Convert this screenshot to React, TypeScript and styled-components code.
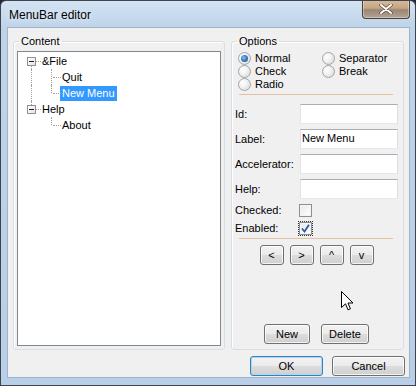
import React from "react";
import styled, { createGlobalStyle } from "styled-components";

const Global = createGlobalStyle`
  html, body { margin: 0; padding: 0; background: #2b2433; }
  body { font-family: "Liberation Sans", Arial, sans-serif; font-size: 11px; color: #000; }
  * { box-sizing: border-box; }
`;

const Window = styled.div`
  position: relative;
  width: 416px;
  height: 386px;
  display: flex;
  flex-direction: column;
  padding: 0 5px 7px 6px;
  border: 1px solid #3d4450;
  border-radius: 6px 6px 0 0;
  background: linear-gradient(180deg, #d3e3f3 0px, #bfd4ea 26px, #b9cfe7 100%);
  overflow: hidden;
`;

const TitleBar = styled.div`
  height: 26px;
  flex: none;
  display: flex;
  align-items: flex-start;
`;

const Title = styled.span`
  font-size: 12px;
  line-height: 15px;
  padding: 7px 0 0 2px;
  color: #000;
  text-shadow: 0 0 6px rgba(255, 255, 255, 0.9);
`;

const CloseButton = styled.div`
  margin-left: auto;
  width: 48px;
  height: 19px;
  margin-top: -1px;
  display: flex;
  align-items: center;
  justify-content: center;
  border: 1px solid #4d4036;
  border-top: none;
  border-radius: 0 0 4px 4px;
  background: linear-gradient(180deg, #d6bb9c 0%, #c6a582 45%, #988676 55%, #b4a493 100%);
  box-shadow: inset 0 0 0 1px rgba(255, 255, 255, 0.35);
`;

const Client = styled.div`
  flex: 1;
  display: flex;
  flex-direction: column;
  background: #f0f0f0;
  border: 1px solid #9fb4cb;
  padding: 7px 4px 1px 5px;
`;

const Groups = styled.div`
  flex: 1;
  display: flex;
  gap: 6px;
`;

const Group = styled.fieldset<{ $w: number }>`
  width: ${(p) => p.$w}px;
  flex: none;
  margin: 0;
  min-width: 0;
  display: flex;
  flex-direction: column;
  border: 1px solid #d5dfe5;
  border-radius: 3px;
  box-shadow: inset 1px 1px 0 #fff;
  padding: 3px 3px 3px 3px;
`;

const OptionsGroup = styled(Group)`
  padding: 4px 5px 5px 3px;
`;

const Legend = styled.legend`
  margin-left: 2px;
  padding: 0 2px;
  font-size: 11px;
  line-height: 13px;
`;

const TreeBox = styled.div`
  flex: 1;
  background: #fff;
  border: 1px solid #828790;
  padding: 1px 0 0 3px;
`;

const Row = styled.div`
  display: flex;
  height: 16px;
  align-items: center;
`;

const Guide = styled.span<{ $up?: boolean; $down?: boolean; $right?: boolean }>`
  position: relative;
  width: 20px;
  height: 16px;
  flex: none;
  &::before {
    content: "";
    position: absolute;
    left: 10px;
    top: ${(p) => (p.$up ? 0 : 8)}px;
    bottom: ${(p) => (p.$down ? 0 : 8)}px;
    border-left: 1px dotted #a0a0a0;
    display: ${(p) => (p.$up || p.$down ? "block" : "none")};
  }
  &::after {
    content: "";
    position: absolute;
    left: 12px;
    right: 0;
    top: 8px;
    border-top: 1px dotted #a0a0a0;
    display: ${(p) => (p.$right ? "block" : "none")};
  }
`;

const Expander = styled.span`
  position: absolute;
  left: 6px;
  top: 4px;
  width: 9px;
  height: 9px;
  z-index: 1;
  border: 1px solid #919191;
  background: linear-gradient(135deg, #ffffff 0%, #e4e4e4 100%);
  &::after {
    content: "";
    position: absolute;
    left: 1px;
    top: 3px;
    width: 5px;
    height: 1px;
    background: #1e1e1e;
  }
`;

const NodeLabel = styled.span<{ $selected?: boolean }>`
  margin-left: -1px;
  padding: 0 2px;
  line-height: 15px;
  height: 15px;
  font-size: 11px;
  background: ${(p) => (p.$selected ? "#3399ff" : "transparent")};
  color: ${(p) => (p.$selected ? "#fff" : "#000")};
  margin-top: ${(p) => (p.$selected ? 1 : 0)}px;
`;

const RadioGrid = styled.div`
  display: grid;
  grid-template-columns: 84px auto;
  grid-auto-rows: 13px;
  margin-left: 3px;
`;

const RadioItem = styled.label`
  display: flex;
  align-items: center;
  gap: 4px;
  font-size: 11px;
  line-height: 13px;
`;

const RadioCircle = styled.span<{ $on?: boolean }>`
  position: relative;
  width: 13px;
  height: 13px;
  flex: none;
  border-radius: 50%;
  border: 1px solid #a2a5a9;
  background: radial-gradient(circle at 35% 35%, #ffffff 0%, #f2f2f2 40%, #d4d4d4 100%);
  &::after {
    content: "";
    position: absolute;
    left: 2px;
    top: 2px;
    width: 7px;
    height: 7px;
    border-radius: 50%;
    display: ${(p) => (p.$on ? "block" : "none")};
    background: radial-gradient(circle at 40% 40%, #8ec3f2 0%, #3f7fc4 45%, #1b4a8a 100%);
  }
`;

const Rule = styled.div<{ $top: number }>`
  height: 1px;
  margin: ${(p) => p.$top}px 5px 0 4px;
  background: #dfc3a2;
  flex: none;
`;

const Form = styled.div`
  display: grid;
  grid-template-columns: 65px 98px;
  grid-template-rows: 20px 20px 20px 20px 13px 13px;
  row-gap: 5px;
  margin-top: 9px;
  align-items: center;
`;

const FieldLabel = styled.span`
  font-size: 11px;
  line-height: 13px;
  white-space: nowrap;
`;

const TextBox = styled.div`
  height: 20px;
  background: #fff;
  border: 1px solid;
  border-color: #abadb3 #dbdfe6 #e3e9ef #e2e3ea;
  padding: 0 1px;
  font-size: 11px;
  line-height: 16px;
  white-space: nowrap;
  overflow: hidden;
`;

const CheckBox = styled.span<{ $focus?: boolean }>`
  width: 13px;
  height: 13px;
  margin-left: -1px;
  display: flex;
  align-items: center;
  justify-content: center;
  border: 1px solid #8e8f8f;
  background: linear-gradient(135deg, #e9e9e9 0%, #ffffff 100%);
  box-shadow: inset 0 0 0 1px #f4f4f4;
  outline: ${(p) => (p.$focus ? "1px dotted #333" : "none")};
  outline-offset: 0px;
`;

const ButtonRow = styled.div<{ $gap: number; $top?: number }>`
  display: flex;
  justify-content: center;
  gap: ${(p) => p.$gap}px;
  margin-top: ${(p) => p.$top ?? 0}px;
  flex: none;
`;

const Spacer = styled.div`
  flex: 1;
`;

const Button = styled.div<{ $w: number; $default?: boolean }>`
  width: ${(p) => p.$w}px;
  height: 20px;
  display: flex;
  align-items: center;
  justify-content: center;
  font-size: 11px;
  border: 1px solid ${(p) => (p.$default ? "#3c7fb1" : "#707070")};
  border-radius: 3px;
  background: linear-gradient(180deg, #f2f2f2 0%, #ebebeb 50%, #dddddd 50%, #cfcfcf 100%);
  box-shadow: inset 0 0 0 1px ${(p) => (p.$default ? "#a9d6f5" : "rgba(255,255,255,0.75)")};
  color: #000;
`;

const DialogButtons = styled.div`
  display: flex;
  justify-content: flex-end;
  gap: 9px;
  margin-top: 6px;
  flex: none;
`;

const Cursor = styled.svg`
  position: absolute;
  left: 340px;
  top: 290px;
`;

type Node = { label: string; guides: { up?: boolean; down?: boolean; right?: boolean; box?: boolean }[]; selected?: boolean };

const tree: Node[] = [
  { label: "&File", guides: [{ down: true, right: true, box: true }] },
  { label: "Quit", guides: [{ up: true, down: true }, { up: true, down: true, right: true }] },
  { label: "New Menu", guides: [{ up: true, down: true }, { up: true, right: true }], selected: true },
  { label: "Help", guides: [{ up: true, right: true, box: true }] },
  { label: "About", guides: [{}, { up: true, right: true }] },
];

const radios = [
  { label: "Normal", on: true },
  { label: "Separator" },
  { label: "Check" },
  { label: "Break" },
  { label: "Radio" },
];

export default function App() {
  return (
    <>
      <Global />
      <Window>
        <TitleBar>
          <Title>MenuBar editor</Title>
          <CloseButton>
            <svg width="14" height="10" viewBox="0 0 14 10">
              <path d="M2 1 L12 9 M12 1 L2 9" stroke="#5a4a3e" strokeWidth="3.4" strokeLinecap="round" />
              <path d="M2 1 L12 9 M12 1 L2 9" stroke="#ffffff" strokeWidth="2" strokeLinecap="round" />
            </svg>
          </CloseButton>
        </TitleBar>
        <Client>
          <Groups>
            <Group $w={212}>
              <Legend>Content</Legend>
              <TreeBox>
                {tree.map((n) => (
                  <Row key={n.label}>
                    {n.guides.map((g, i) => (
                      <Guide key={i} $up={g.up} $down={g.down} $right={g.right}>
                        {g.box && <Expander />}
                      </Guide>
                    ))}
                    <NodeLabel $selected={n.selected}>{n.label}</NodeLabel>
                  </Row>
                ))}
              </TreeBox>
            </Group>
            <OptionsGroup $w={173}>
              <Legend>Options</Legend>
              <RadioGrid>
                {radios.map((r) => (
                  <RadioItem key={r.label}>
                    <RadioCircle $on={r.on} />
                    {r.label}
                  </RadioItem>
                ))}
              </RadioGrid>
              <Rule $top={3} />
              <Form>
                <FieldLabel>Id:</FieldLabel>
                <TextBox />
                <FieldLabel>Label:</FieldLabel>
                <TextBox>New Menu</TextBox>
                <FieldLabel>Accelerator:</FieldLabel>
                <TextBox />
                <FieldLabel>Help:</FieldLabel>
                <TextBox />
                <FieldLabel>Checked:</FieldLabel>
                <CheckBox />
                <FieldLabel>Enabled:</FieldLabel>
                <CheckBox $focus>
                  <svg width="9" height="9" viewBox="0 0 9 9">
                    <path d="M1 4.5 L3.5 7.5 L8 0.8" fill="none" stroke="#2a5ca8" strokeWidth="1.8" />
                  </svg>
                </CheckBox>
              </Form>
              <Rule $top={3} />
              <ButtonRow $gap={6} $top={6}>
                <Button $w={24}>&lt;</Button>
                <Button $w={24}>&gt;</Button>
                <Button $w={24}>^</Button>
                <Button $w={24}>v</Button>
              </ButtonRow>
              <Spacer />
              <ButtonRow $gap={11}>
                <Button $w={46}>New</Button>
                <Button $w={48}>Delete</Button>
              </ButtonRow>
            </OptionsGroup>
          </Groups>
          <DialogButtons>
            <Button $w={73} $default>OK</Button>
            <Button $w={73}>Cancel</Button>
          </DialogButtons>
        </Client>
        <Cursor width="13" height="20" viewBox="0 0 13 20">
          <path d="M0.5 0.5 L0.5 16.5 L4.5 12.8 L7 18.8 L9.4 17.8 L7 12 L12 12 Z" fill="#fff" stroke="#000" strokeWidth="1" strokeLinejoin="miter" />
        </Cursor>
      </Window>
    </>
  );
}
